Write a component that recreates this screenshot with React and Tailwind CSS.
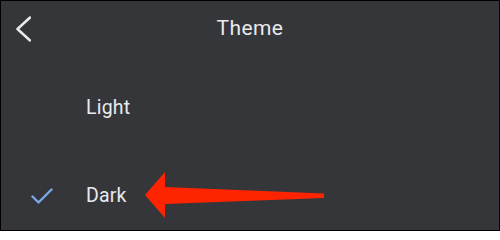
export default function App() {
  const rows = [
    { label: "Light", selected: false },
    { label: "Dark", selected: true },
  ];

  return (
    <div
      className="relative w-[500px] h-[231px] overflow-hidden border border-black bg-[#35363a] text-[#e8eaed]"
      style={{ fontFamily: "Roboto, 'Noto Sans', Arial, sans-serif" }}
    >
      {/* header */}
      <div className="grid grid-cols-[1fr_auto_1fr] items-center h-[55px]">
        <div className="flex items-center pl-[14px]">
          <svg width="16" height="28" viewBox="0 0 16 28" fill="none">
            <path
              d="M15 2.5 L2.5 14 L15 25.5"
              stroke="#e8eaed"
              strokeWidth="2.5"
              strokeLinecap="round"
              strokeLinejoin="round"
            />
          </svg>
        </div>
        <h1 className="text-[21px] leading-none font-normal tracking-[0.4px]">Theme</h1>
        <div />
      </div>

      {/* options */}
      <div className="pt-[8px]">
        {rows.map((row) => (
          <div key={row.label} className="flex items-center h-[88px]">
            <div className="w-[85px] flex items-center">
              {row.selected && (
                <svg width="22" height="16" viewBox="0 0 22 16" fill="none" className="ml-[30px]">
                  <path
                    d="M1.5 8.5 L7.5 14.5 L20.5 1.5"
                    stroke="#7ea6e8"
                    strokeWidth="2.4"
                    strokeLinecap="round"
                    strokeLinejoin="round"
                  />
                </svg>
              )}
            </div>
            <span className="text-[19.5px] leading-none tracking-[0.2px]">{row.label}</span>
          </div>
        ))}
      </div>

      {/* annotation arrow */}
      <svg
        className="absolute -left-px -top-px pointer-events-none"
        width="500"
        height="231"
        viewBox="0 0 500 231"
      >
        <polygon
          points="145,195 165,172 165,187 324,193.5 324,198 165,204 165,218"
          fill="#ff2400"
        />
      </svg>
    </div>
  );
}
